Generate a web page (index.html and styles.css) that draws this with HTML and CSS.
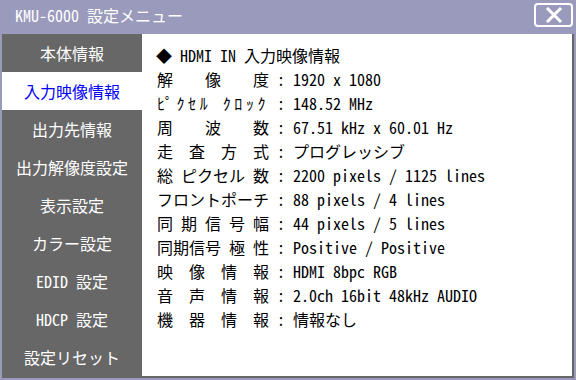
FILE: index.html
```html
<!DOCTYPE html>
<html lang="ja">
<head>
<meta charset="utf-8">
<title>KMU-6000 設定メニュー</title>
<link rel="stylesheet" href="styles.css">
</head>
<body>
<div class="titlebar">
  <div class="title">KMU-6000 設定メニュー</div>
  <div class="close">
    <svg width="18" height="16" viewBox="0 0 18 16"><path d="M2 1 L16 15 M16 1 L2 15" stroke="#fff" stroke-width="3" fill="none"/></svg>
  </div>
</div>
<div class="window">
  <nav class="sidebar">
    <div class="item">本体情報</div>
    <div class="item active">入力映像情報</div>
    <div class="item">出力先情報</div>
    <div class="item">出力解像度設定</div>
    <div class="item">表示設定</div>
    <div class="item">カラー設定</div>
    <div class="item">EDID 設定</div>
    <div class="item">HDCP 設定</div>
    <div class="item">設定リセット</div>
  </nav>
  <main class="main">
    <div class="row">◆ HDMI IN 入力映像情報</div>
    <div class="row"><span class="label">解 像 度</span><span class="colon">:</span><span class="value">1920 x 1080</span></div>
    <div class="row"><span class="label">ﾋﾟｸｾﾙ ｸﾛｯｸ</span><span class="colon">:</span><span class="value">148.52 MHz</span></div>
    <div class="row"><span class="label">周 波 数</span><span class="colon">:</span><span class="value">67.51 kHz x 60.01 Hz</span></div>
    <div class="row"><span class="label">走 査 方 式</span><span class="colon">:</span><span class="value">プログレッシブ</span></div>
    <div class="row"><span class="label">総 ピクセル 数</span><span class="colon">:</span><span class="value">2200 pixels / 1125 lines</span></div>
    <div class="row"><span class="label">フロントポーチ</span><span class="colon">:</span><span class="value">88 pixels / 4 lines</span></div>
    <div class="row"><span class="label">同 期 信 号 幅</span><span class="colon">:</span><span class="value">44 pixels / 5 lines</span></div>
    <div class="row"><span class="label">同期信号 極 性</span><span class="colon">:</span><span class="value">Positive / Positive</span></div>
    <div class="row"><span class="label">映 像 情 報</span><span class="colon">:</span><span class="value">HDMI 8bpc RGB</span></div>
    <div class="row"><span class="label">音 声 情 報</span><span class="colon">:</span><span class="value">2.0ch 16bit 48kHz AUDIO</span></div>
    <div class="row"><span class="label">機 器 情 報</span><span class="colon">:</span><span class="value">情報なし</span></div>
  </main>
</div>
</body>
</html>
```
FILE: styles.css
```css
* { box-sizing: border-box; }
html, body {
  margin: 0;
  padding: 0;
}
body {
  width: 576px;
  height: 380px;
  background: #9a9abc;
  font-family: "Noto Sans Mono CJK JP", "Noto Sans CJK JP", monospace;
  font-size: 16px;
  overflow: hidden;
}
.titlebar {
  height: 34px;
  display: flex;
  align-items: center;
  justify-content: space-between;
  padding: 0 3px 4px 15px;
}
.title {
  color: #fff;
  font-size: 16px;
  line-height: 20px;
}
.close {
  width: 39px;
  height: 24px;
  border: 2px solid #fff;
  border-radius: 4px;
  display: flex;
  align-items: center;
  justify-content: center;
}
.close svg { display: block; }
.window {
  display: flex;
  margin: 0 2px 0 2px;
  height: 344px;
  border-right: 2px solid #666;
  border-bottom: 2px solid #666;
}
.sidebar {
  width: 140px;
  background: #676767;
  display: flex;
  flex-direction: column;
}
.item {
  height: 38px;
  line-height: 38px;
  text-align: center;
  color: #fff;
  font-size: 16px;
}
.item.active {
  background: #fff;
  color: #0000ff;
}
.main {
  flex: 1;
  background: #fff;
  padding: 9px 0 0 14px;
  color: #000;
}
.row {
  height: 24px;
  line-height: 24px;
  white-space: nowrap;
}
.label {
  display: inline-block;
  width: 112px;
  text-align: justify;
  text-align-last: justify;
  margin-left: 1px;
  vertical-align: top;
}
.colon {
  display: inline-block;
  width: 24px;
  text-align: center;
}
.value {
  margin-left: 0;
}
```
